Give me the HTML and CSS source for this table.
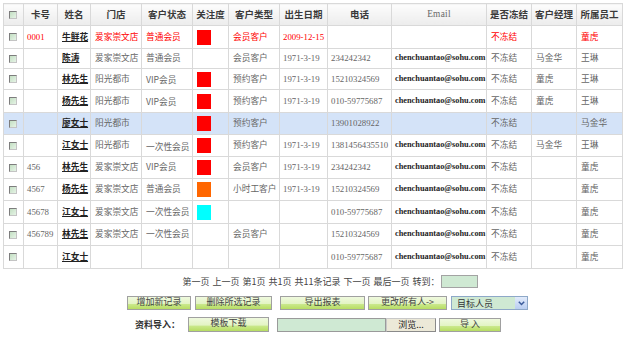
FILE: index.html
```html
<!DOCTYPE html>
<html lang="zh-CN">
<head>
<meta charset="utf-8">
<title>客户列表</title>
<link rel="stylesheet" href="styles.css">
</head>
<body>
<div class="page">
  <table class="grid">
    <colgroup>
      <col class="w-cb"><col class="w-card"><col class="w-name"><col class="w-shop"><col class="w-status"><col class="w-focus"><col class="w-type"><col class="w-birth"><col class="w-tel"><col class="w-mail"><col class="w-frz"><col class="w-mgr"><col class="w-staff">
    </colgroup>
    <thead>
      <tr>
        <th class="cbc"><span class="cb"></span></th>
        <th>卡号</th><th>姓名</th><th>门店</th><th>客户状态</th><th>关注度</th><th>客户类型</th><th>出生日期</th><th>电话</th><th class="mailh">Email</th><th>是否冻结</th><th>客户经理</th><th>所属员工</th>
      </tr>
    </thead>
    <tbody>
      <tr class="h23 red">
        <td class="cbc"><span class="cb"></span></td>
        <td class="n">0001</td><td><a class="nm">牛鲜花</a></td><td>爱家崇文店</td><td>普通会员</td><td><span class="sq"></span></td><td>会员客户</td><td class="n">2009-12-15</td><td class="n"></td><td></td><td>不冻结</td><td></td><td>童虎</td>
      </tr>
      <tr class="h20">
        <td class="cbc"><span class="cb"></span></td>
        <td class="n"></td><td><a class="nm">陈涛</a></td><td>爱家崇文店</td><td>普通会员</td><td></td><td>会员客户</td><td class="n">1971-3-19</td><td class="n">234242342</td><td class="em">chenchuantao@sohu.com</td><td>不冻结</td><td>马金华</td><td>王琳</td>
      </tr>
      <tr class="h21">
        <td class="cbc"><span class="cb"></span></td>
        <td class="n"></td><td><a class="nm">林先生</a></td><td>阳光都市</td><td><span class="low">VIP会员</span></td><td><span class="sq"></span></td><td>预约客户</td><td class="n">1971-3-19</td><td class="n">15210324569</td><td class="em">chenchuantao@sohu.com</td><td>不冻结</td><td>童虎</td><td>王琳</td>
      </tr>
      <tr class="h23">
        <td class="cbc"><span class="cb"></span></td>
        <td class="n"></td><td><a class="nm">杨先生</a></td><td>阳光都市</td><td><span class="low">VIP会员</span></td><td><span class="sq"></span></td><td>预约客户</td><td class="n">1971-3-19</td><td class="n">010-59775687</td><td class="em">chenchuantao@sohu.com</td><td>不冻结</td><td>童虎</td><td>王琳</td>
      </tr>
      <tr class="h22 hl">
        <td class="cbc"><span class="cb"></span></td>
        <td class="n"></td><td><a class="nm">廖女士</a></td><td>阳光都市</td><td></td><td><span class="sq"></span></td><td>预约客户</td><td class="n"></td><td class="n">13901028922</td><td></td><td>不冻结</td><td></td><td>马金华</td>
      </tr>
      <tr class="h22">
        <td class="cbc"><span class="cb"></span></td>
        <td class="n"></td><td><a class="nm">江女士</a></td><td>阳光都市</td><td><span class="low">一次性会员</span></td><td><span class="sq"></span></td><td>预约客户</td><td class="n">1971-3-19</td><td class="n">1381456435510</td><td class="em">chenchuantao@sohu.com</td><td>不冻结</td><td>马金华</td><td>王琳</td>
      </tr>
      <tr class="h22">
        <td class="cbc"><span class="cb"></span></td>
        <td class="n">456</td><td><a class="nm">林先生</a></td><td>爱家崇文店</td><td>VIP会员</td><td><span class="sq"></span></td><td>会员客户</td><td class="n">1971-3-19</td><td class="n">234242342</td><td class="em">chenchuantao@sohu.com</td><td>不冻结</td><td></td><td>童虎</td>
      </tr>
      <tr class="h22">
        <td class="cbc"><span class="cb"></span></td>
        <td class="n">4567</td><td><a class="nm">杨先生</a></td><td>爱家崇文店</td><td>普通会员</td><td><span class="sq orange"></span></td><td>小时工客户</td><td class="n">1971-3-19</td><td class="n">15210324569</td><td class="em">chenchuantao@sohu.com</td><td>不冻结</td><td></td><td>童虎</td>
      </tr>
      <tr class="h23">
        <td class="cbc"><span class="cb"></span></td>
        <td class="n">45678</td><td><a class="nm">江女士</a></td><td>爱家崇文店</td><td>一次性会员</td><td><span class="sq cyan"></span></td><td></td><td class="n"></td><td class="n">010-59775687</td><td class="em">chenchuantao@sohu.com</td><td>不冻结</td><td></td><td>童虎</td>
      </tr>
      <tr class="h22">
        <td class="cbc"><span class="cb"></span></td>
        <td class="n">456789</td><td><a class="nm">林先生</a></td><td>爱家崇文店</td><td>一次性会员</td><td></td><td>会员客户</td><td class="n"></td><td class="n">15210324569</td><td class="em">chenchuantao@sohu.com</td><td>不冻结</td><td></td><td>童虎</td>
      </tr>
      <tr class="h23">
        <td class="cbc"><span class="cb"></span></td>
        <td class="n"></td><td><a class="nm">江女士</a></td><td></td><td></td><td></td><td></td><td class="n"></td><td class="n">010-59775687</td><td class="em">chenchuantao@sohu.com</td><td>不冻结</td><td></td><td>童虎</td>
      </tr>
    </tbody>
  </table>

  <div class="pager">
    <span class="pager-text">第一页 上一页 第1页 共1页 共11条记录 下一页 最后一页 转到：</span>
    <span class="goto"></span>
  </div>

  <div class="bar bar-actions">
    <button class="btn b-add">增加新记录</button>
    <button class="btn b-del">删除所选记录</button>
    <button class="btn b-exp">导出报表</button>
    <button class="btn b-own">更改所有人-&gt;</button>
    <div class="sel">
      <span class="sel-text">目标人员</span>
      <span class="sel-arrow"><svg width="7" height="5" viewBox="0 0 7 5"><path d="M0.8 0.8 L3.5 3.5 L6.2 0.8" fill="none" stroke="#3a5a9a" stroke-width="1.5"/></svg></span>
    </div>
  </div>

  <div class="bar bar-import">
    <span class="lbl">资料导入：</span>
    <button class="btn b-tpl">模板下载</button>
    <span class="file"></span>
    <button class="browse">浏览...</button>
    <button class="btn b-imp">导 入</button>
  </div>
</div>
</body>
</html>
```
FILE: styles.css
```css
body {
  margin: 0;
  background: #fff;
  font-family: "Noto Sans CJK SC", "Noto Sans", sans-serif;
  font-size: 8.7px;
  color: #666;
}
.page {
  padding: 3px 0 0 3px;
}
.grid {
  border-collapse: collapse;
  table-layout: fixed;
  width: 620px;
}
.w-cb { width: 20px; }
.w-card { width: 34px; }
.w-name { width: 33px; }
.w-shop { width: 51px; }
.w-status { width: 51px; }
.w-focus { width: 36px; }
.w-type { width: 51px; }
.w-birth { width: 48px; }
.w-tel { width: 64px; }
.w-mail { width: 95px; }
.w-frz { width: 45px; }
.w-mgr { width: 45px; }
.w-staff { width: 46px; }

.grid th,
.grid td {
  border: 1px solid #d9d9d9;
  padding: 0 0 0 4px;
  text-align: left;
  white-space: nowrap;
  overflow: hidden;
  line-height: 1;
  vertical-align: middle;
}
.grid th {
  height: 21px;
  padding: 0;
  text-align: center;
  font-size: 9.5px;
  font-weight: bold;
  color: #3a3a3a;
  background: linear-gradient(#fcfcfc, #ececec);
}
.grid th.mailh {
  font-family: "Liberation Serif", serif;
  font-weight: normal;
  font-size: 9.3px;
  color: #666;
  letter-spacing: 0.3px;
}
.grid .cbc {
  padding: 0 2px 0 0;
  text-align: center;
}
.cb {
  display: inline-block;
  width: 6px;
  height: 6px;
  border: 1px solid;
  border-color: #7d7d7d #c4c4c4 #c4c4c4 #7d7d7d;
  background: linear-gradient(135deg, #c3dfc3, #e6f3e6);
  vertical-align: middle;
}
.h20 td { height: 19px; }
.h21 td { height: 20px; }
.h22 td { height: 21px; }
.h23 td { height: 22px; }
.grid .n {
  font-family: "Liberation Serif", serif;
  font-size: 8.8px;
  padding-left: 3px;
}
.grid .em {
  font-family: "Liberation Serif", serif;
  font-size: 8.3px;
  font-weight: bold;
  color: #1e1e1e;
  padding-left: 3px;
}
.low {
  display: inline-block;
  margin-top: 3px;
}
.red td { color: #f00; }
.hl td { background: #d4e3f8; }
.nm {
  color: #222;
  font-weight: bold;
  text-decoration: underline;
}
.sq {
  display: block;
  width: 14px;
  height: 15px;
  background: #f00;
}
.sq.orange { background: #ff6600; }
.sq.cyan { background: #00ffff; }

.pager {
  display: flex;
  align-items: center;
  justify-content: center;
  padding-left: 27px;
  margin-top: 6px;
  height: 13px;
  color: #444;
}
.pager-text {
  font-size: 9px;
  word-spacing: 1px;
}
.goto {
  width: 35px;
  height: 11px;
  margin-left: 1px;
  border: 1px solid #a3a3a3;
  background: #cfe9d3;
}

.bar {
  display: flex;
  align-items: center;
}
.bar-actions {
  margin-top: 8px;
  padding-left: 124px;
}
.bar-import {
  margin-top: 7px;
  padding-left: 132px;
}
.btn {
  box-sizing: border-box;
  height: 14px;
  padding: 0 0 2px;
  margin: 0;
  border: 1px solid #a0a0a0;
  background: linear-gradient(#eff9de 0%, #e3f4c4 55%, #c9e88a 62%, #b7dd62 100%);
  font-family: "Noto Sans CJK SC", sans-serif;
  font-size: 9px;
  line-height: 10px;
  color: #444;
}
.b-add { width: 64px; }
.b-del { width: 77px; margin-left: 4px; }
.b-exp { width: 85px; margin-left: 8px; }
.b-own { width: 79px; margin-left: 3px; }
.sel {
  box-sizing: border-box;
  display: flex;
  align-items: center;
  width: 77px;
  height: 14px;
  margin-left: 4px;
  border: 1px solid #8ea8c8;
  background: #cfe9d3;
}
.sel-text {
  flex: 1;
  padding-left: 5px;
  font-size: 9px;
  color: #333;
}
.sel-arrow {
  display: flex;
  align-items: center;
  justify-content: center;
  width: 12px;
  height: 12px;
  background: linear-gradient(#e2ebfb, #b9cdf1);
}
.lbl {
  width: 53px;
  font-size: 9px;
  font-weight: bold;
  color: #333;
}
.b-tpl {
  width: 81px;
  height: 15px;
  padding-bottom: 4px;
}
.file {
  box-sizing: border-box;
  width: 109px;
  height: 14px;
  margin-left: 8px;
  border: 1px solid #9a9a9a;
  background: #cfe9d3;
}
.browse {
  box-sizing: border-box;
  width: 50px;
  height: 14px;
  margin: 0;
  padding: 0;
  border: 1px solid;
  border-color: #c8c8c8 #8a8a8a #8a8a8a #c8c8c8;
  background: #ece9d8;
  font-family: "Noto Sans CJK SC", sans-serif;
  font-size: 9px;
  line-height: 10px;
  color: #222;
}
.b-imp {
  width: 62px;
  margin-left: 3px;
  padding-bottom: 3px;
}
```
